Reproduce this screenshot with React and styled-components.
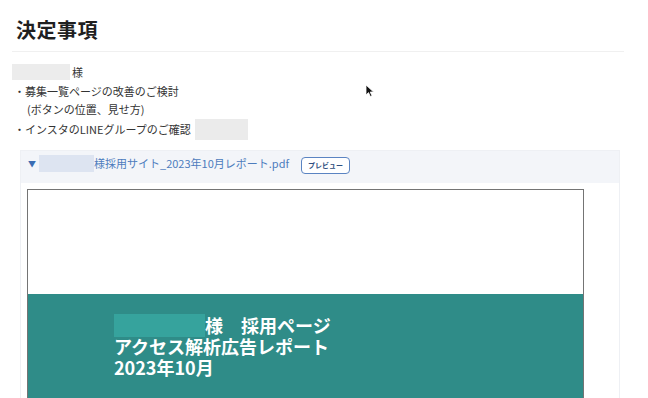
import React from "react";
import styled, { createGlobalStyle } from "styled-components";

const GlobalStyle = createGlobalStyle`
  body {
    margin: 0;
    background: #ffffff;
    font-family: "Noto Sans CJK JP", "Noto Sans", "Liberation Sans", sans-serif;
    color: #333333;
  }
`;

const Page = styled.div`
  position: relative;
  width: 648px;
  height: 398px;
  overflow: hidden;
  padding: 14px 24px 0 12px;
  box-sizing: border-box;
`;

const Title = styled.h1`
  margin: 0 0 0 4px;
  font-size: 20px;
  font-weight: 700;
  line-height: 32px;
  color: #1f1f1f;
  letter-spacing: 0.5px;
`;

const Divider = styled.div`
  height: 1px;
  background: #f0f0f0;
  margin-top: 5px;
`;

const Notes = styled.div`
  margin-top: 11px;
  font-size: 11px;
  line-height: 18.5px;
  color: #333;
`;

const Line = styled.div`
  display: flex;
  align-items: center;
  height: ${(p) => p.$h || 18.5}px;
  padding-left: ${(p) => p.$indent || 0}px;
  white-space: nowrap;
`;

const Redact = styled.span`
  display: inline-block;
  width: ${(p) => p.$w}px;
  height: ${(p) => p.$h}px;
  background: ${(p) => p.$bg};
  margin-left: ${(p) => p.$gap || 0}px;
  flex-shrink: 0;
`;

const Block = styled.div`
  margin: 10px 4px 0 8px;
  border: 1px solid #eef0f4;
  border-bottom: none;
  background: #ffffff;
  height: 260px;
`;

const BlockHeader = styled.div`
  display: flex;
  align-items: flex-start;
  height: 32px;
  padding: 4px 0 0 7px;
  box-sizing: border-box;
  background: #f3f5f9;
  color: #4d7cbd;
  font-size: 11px;
  line-height: 17px;
  white-space: nowrap;
`;

const Caret = styled.span`
  font-size: 8px;
  color: #3b6db3;
  margin-right: 3px;
`;

const PreviewButton = styled.span`
  display: inline-flex;
  align-items: center;
  justify-content: center;
  margin: 2px 0 0 12px;
  width: 47px;
  height: 15px;
  border: 1px solid #5b84c2;
  border-radius: 4px;
  font-size: 7px;
  line-height: 15px;
  font-weight: 700;
  color: #2f4f80;
  background: #fff;
`;

const Viewer = styled.div`
  padding: 6px 0 0 6px;
`;

const PdfPage = styled.div`
  width: 555px;
  height: 220px;
  border: 1px solid #747474;
  border-bottom: none;
  display: flex;
  flex-direction: column;
`;

const PdfWhite = styled.div`
  height: 104px;
  background: #ffffff;
`;

const PdfCover = styled.div`
  flex: 1;
  background: #2f8c88;
  padding: 21px 0 0 86px;
  color: #ffffff;
  font-size: 18px;
  font-weight: 700;
`;

const CoverLine = styled.div`
  display: flex;
  align-items: center;
  height: 21px;
  line-height: 21px;
  white-space: nowrap;
`;

const Cursor = styled.svg`
  position: absolute;
  left: 365px;
  top: 84px;
`;

export default function App() {
  return (
    <>
      <GlobalStyle />
      <Page>
        <Title>決定事項</Title>
        <Divider />
        <Notes>
          <Line>
            <Redact $w={58} $h={16} $bg="#ececec" />
            <span style={{ marginLeft: 2 }}>様</span>
          </Line>
          <Line $indent={2}>・募集一覧ページの改善のご検討</Line>
          <Line $indent={15}>(ボタンの位置、見せ方)</Line>
          <Line $indent={2} $h={21}>
            ・インスタのLINEグループのご確認
            <Redact $w={53} $h={21} $bg="#ebebeb" $gap={4} />
          </Line>
        </Notes>
        <Block>
          <BlockHeader>
            <Caret>▼</Caret>
            <Redact $w={55} $h={17} $bg="#dde4f1" />
            <span>様採用サイト_2023年10月レポート.pdf</span>
            <PreviewButton>プレビュー</PreviewButton>
          </BlockHeader>
          <Viewer>
            <PdfPage>
              <PdfWhite />
              <PdfCover>
                <CoverLine>
                  <Redact $w={91} $h={23} $bg="#36a39d" />
                  <span>様　採用ページ</span>
                </CoverLine>
                <CoverLine>アクセス解析広告レポート</CoverLine>
                <CoverLine>2023年10月</CoverLine>
              </PdfCover>
            </PdfPage>
          </Viewer>
        </Block>
        <Cursor width="10" height="14" viewBox="0 0 10 14">
          <path d="M1 1 L1 11 L3.5 8.6 L5.4 12.6 L7 11.8 L5.2 8 L8.6 8 Z" fill="#111" stroke="#fff" strokeWidth="0.8" />
        </Cursor>
      </Page>
    </>
  );
}
